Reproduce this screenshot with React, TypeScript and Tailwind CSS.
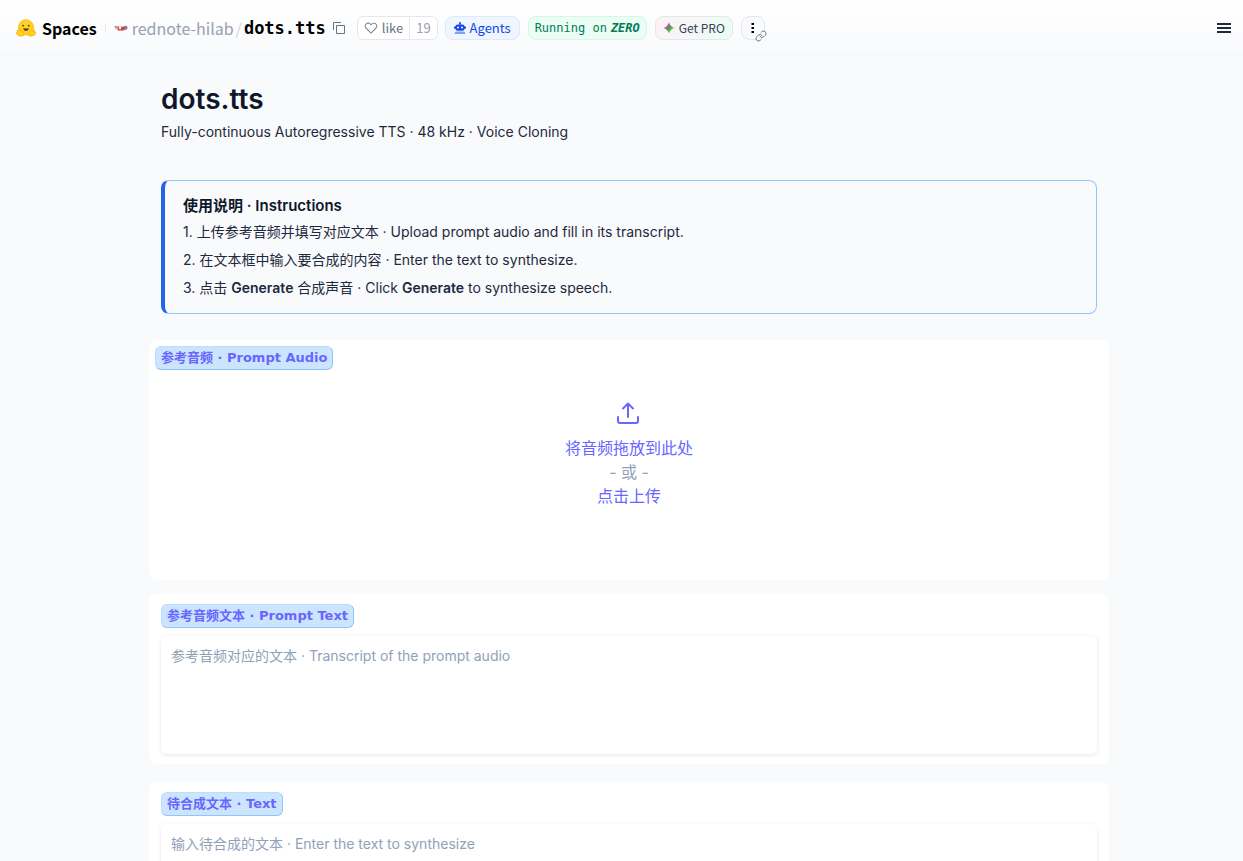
import { ReactNode, useState } from "react";

const SANS = "font-['Inter','Noto_Sans_CJK_SC',sans-serif]";
const HUB = "font-['Noto_Sans_CJK_SC',sans-serif]";
const MONO = "font-['DejaVu_Sans_Mono',monospace]";

const LABEL =
  "inline-flex h-6 items-center rounded-md border border-[#bfdbfe] border-r-[#93c5fd] border-b-[#93c5fd] bg-[#cce5ff] px-[5px] font-['DejaVu_Sans','Noto_Sans_CJK_SC',sans-serif] text-[13px] font-bold whitespace-nowrap text-[#6966ff]";

function HubLogo() {
  return (
    <svg viewBox="0 0 20 18" className="h-[18px] w-5" aria-hidden="true">
      <circle cx="10" cy="8.3" r="7.6" fill="#ffd21e" stroke="#ffb01a" strokeWidth="0.8" />
      <circle cx="7.2" cy="6.6" r="0.9" fill="#3a3b45" />
      <circle cx="12.8" cy="6.6" r="0.9" fill="#3a3b45" />
      <path d="M7.3 8.9q2.7 1.4 5.4 0-.3 3-2.7 3t-2.7-3z" fill="#3a3b45" />
      <path d="M8.7 11.2q1.3-1 2.6 0-1.3 1-2.6 0z" fill="#f94040" />
      <path d="M1.3 12.5q-.5-1.8 1-1.5l1.4 1.3q-.2-2.2 1.1-1.8 1.2 2 2.6 2.9 1.4 1.2.5 2.9-3.3 1.9-6.5-.4-1.2-.7-.8-1.6-.6-1.2.7-1.8z" fill="#ffd21e" stroke="#ffa60f" strokeWidth="0.7" />
      <path d="M18.7 12.5q.5-1.8-1-1.5l-1.4 1.3q.2-2.2-1.1-1.8-1.2 2-2.6 2.9-1.4 1.2-.5 2.9 3.3 1.9 6.5-.4 1.2-.7.8-1.6.6-1.2-.7-1.8z" fill="#ffd21e" stroke="#ffa60f" strokeWidth="0.7" />
    </svg>
  );
}

function OrgAvatar() {
  return (
    <svg viewBox="0 0 14 14" className="size-3.5" aria-hidden="true">
      <path d="M.3 5.2 3 4.8l2 .8-1 3.2-2.7-.5z" fill="#d9b5ab" />
      <path d="M1 5.3l1.3.5" stroke="#8b6f6b" />
      <path d="M3.3 5.8 10 5.4l1.2 2.3-1.2 1.8-6 .3z" fill="#c9606a" />
      <path d="M5 6 7 5.6l.4 1.9-2 .5z" fill="#fff" />
      <path d="M7.2 6.4 9.6 6l.4 2.4-2.6.5z" fill="#d5303e" />
      <path d="M9.8 5.1 12.6 4.7l1.2 2.4-2 2.1-1.4-.6z" fill="#8c7f80" />
    </svg>
  );
}

function CopyIcon() {
  return (
    <svg viewBox="0 0 12 12" className="size-3" fill="none" stroke="currentColor" aria-hidden="true">
      <path d="M3.5 3.5h8v8h-8z" />
      <path d="M.5 8V.5H8" />
    </svg>
  );
}

function HeartIcon() {
  return (
    <svg viewBox="0 0 32 32" className="size-3.5" fill="currentColor" aria-hidden="true">
      <path d="M22.45 6a5.47 5.47 0 0 1 3.91 1.64 5.7 5.7 0 0 1 0 8L16 26.13 5.64 15.64a5.7 5.7 0 0 1 0-8 5.48 5.48 0 0 1 7.82 0L16 10.24l2.53-2.58A5.44 5.44 0 0 1 22.45 6m0-2a7.47 7.47 0 0 0-5.34 2.24L16 7.36l-1.11-1.12a7.49 7.49 0 0 0-10.68 0 7.72 7.72 0 0 0 0 10.82L16 29l11.79-11.94a7.72 7.72 0 0 0 0-10.82A7.49 7.49 0 0 0 22.45 4z" />
    </svg>
  );
}

function AgentIcon() {
  return (
    <svg viewBox="0 0 12 12" className="size-3" fill="currentColor" aria-hidden="true">
      <circle cx="6" cy="1.1" r="1" />
      <path d="M5.5 1h1v2h-1z" />
      <path fillRule="evenodd" d="M3.8 2.4h4.4a2.6 2.6 0 0 1 2.5 2.1h.5q.8 0 .8.7v.8q0 .7-.8.7h-.5a2.6 2.6 0 0 1-2.5 2.1H3.8a2.6 2.6 0 0 1-2.5-2.1H.8Q0 6.7 0 6v-.8q0-.7.8-.7h.5a2.6 2.6 0 0 1 2.5-2.1zm.2 2.2a1 1 0 1 0 0 2 1 1 0 0 0 0-2zm4 0a1 1 0 1 0 0 2 1 1 0 0 0 0-2z" />
      <path d="M.8 12v-.7q0-1.7 1.8-1.7h6.8q1.8 0 1.8 1.7v.7z" opacity="0.5" />
    </svg>
  );
}

function SparkIcon() {
  return (
    <svg viewBox="0 0 12 12" className="size-3" aria-hidden="true">
      <defs>
        <linearGradient id="spark" x1="0" y1="0" x2="1" y2="1">
          <stop offset="0.25" stopColor="#ff2da0" />
          <stop offset="0.5" stopColor="#5f8f5c" />
          <stop offset="0.62" stopColor="#2fbf5f" />
          <stop offset="0.8" stopColor="#ffe000" />
        </linearGradient>
      </defs>
      <path d="M6 .3Q7.2 4.8 11.7 6 7.2 7.2 6 11.7 4.8 7.2.3 6 4.8 4.8 6 .3z" fill="url(#spark)" />
    </svg>
  );
}

function LinkIcon() {
  return (
    <svg viewBox="0 0 24 24" className="size-3" fill="none" stroke="currentColor" strokeWidth="2" strokeLinecap="round" aria-hidden="true">
      <path d="M10 13a5 5 0 0 0 7.54.54l3-3a5 5 0 0 0-7.07-7.07l-1.72 1.71" />
      <path d="M14 11a5 5 0 0 0-7.54-.54l-3 3a5 5 0 0 0 7.07 7.07l1.71-1.71" />
    </svg>
  );
}

function UploadIcon() {
  return (
    <svg viewBox="0 0 24 24" className="size-6" fill="none" stroke="currentColor" strokeWidth="2" strokeLinecap="round" strokeLinejoin="round" aria-hidden="true">
      <path d="M1 16v4a2 2 0 0 0 2 2h16a2 2 0 0 0 2-2v-4" />
      <path d="M11 16V3" />
      <path d="M6 7.5 11 2.5l5 5" />
    </svg>
  );
}

function Header() {
  return (
    <header className={`${HUB} flex h-[55px] shrink-0 items-center border-b border-gray-100 bg-gradient-to-b from-white to-[#f9fafc] pt-0.5 pr-3 pl-4 text-sm leading-5`}>
      <a href="#spaces" className="flex items-center gap-1.5 text-base font-bold text-black">
        <HubLogo />
        Spaces
      </a>
      <span className="mx-2 h-2 w-px bg-gray-200" />
      <a href="#org" className="flex items-center gap-1 text-base text-gray-400">
        <OrgAvatar />
        rednote-hilab
      </a>
      <span className="mx-0.5 text-base text-gray-300">/</span>
      <a href="#space" className={`${MONO} text-[17px] font-bold text-black`}>dots.tts</a>
      <button aria-label="Copy space name" className="ml-[7px] text-gray-500"><CopyIcon /></button>
      <div className="ml-3 flex h-6 rounded-md border border-gray-200 bg-white">
        <button className="flex items-center gap-1 px-1.5 text-[13px] text-gray-500"><HeartIcon />like</button>
        <button className="border-l border-gray-200 px-1.5 text-[13px] text-gray-400">19</button>
      </div>
      <button className="ml-[7px] flex h-6 items-center gap-1 rounded-lg border border-blue-100 bg-blue-50 px-2 text-[13px] text-blue-700">
        <AgentIcon />
        Agents
      </button>
      <button className={`${MONO} ml-2 flex h-6 items-center gap-1 rounded-lg border border-emerald-100 bg-[#ecfdf5] px-1.5 text-xs text-emerald-700`}>
        Running on
        <b className="italic">ZERO</b>
      </button>
      <button className="ml-2 flex h-6 items-center gap-1 rounded-lg border border-gray-200 bg-gradient-to-r from-pink-50 to-emerald-50 px-[7px] text-xs text-gray-700">
        <SparkIcon />
        Get PRO
      </button>
      <div className="relative ml-2">
        <button aria-label="More" className="flex h-6 w-6 items-center justify-center rounded-lg border border-gray-200 bg-gray-50 text-black">
          <svg viewBox="0 0 4 12" className="h-3 w-1" fill="currentColor">
            <path d="M.5 1h2.5v2H.5zM.5 5h2.5v2H.5zM.5 9h2.5v2H.5z" />
          </svg>
        </button>
        <span className="absolute -right-0.5 -bottom-0.5 rounded-full bg-white text-gray-500"><LinkIcon /></span>
      </div>
      <button aria-label="Menu" className="ml-auto text-gray-800">
        <svg viewBox="0 0 14 10" className="h-2.5 w-3.5" fill="currentColor">
          <path d="M0 0h14v2H0zM0 4h14v2H0zM0 8h14v2H0z" />
        </svg>
      </button>
    </header>
  );
}

interface TextFieldProps {
  id: string;
  label: string;
  placeholder: string;
}

function TextField({ id, label, placeholder }: TextFieldProps) {
  const [value, setValue] = useState("");
  return (
    <div className="flex flex-col items-start rounded-lg bg-white px-3 py-2.5">
      <label htmlFor={id} className={LABEL}>{label}</label>
      <textarea
        id={id}
        value={value}
        onChange={e => setValue(e.target.value)}
        placeholder={placeholder}
        className="mt-2 h-[118px] w-full resize-none rounded-md bg-white px-2.5 py-2.5 text-sm leading-5 text-slate-800 shadow-[0_1px_4px_rgba(0,0,0,0.1)] outline-none placeholder:text-slate-400"
      />
    </div>
  );
}

function Step({ children }: { children: ReactNode }) {
  return <li className="leading-7">{children}</li>;
}

export default function App() {
  return (
    <div className={`${SANS} flex h-screen flex-col bg-[#f9fafc] text-slate-800`}>
      <Header />
      <main className="min-h-0 flex-1 overflow-y-auto pl-[15px] [scrollbar-width:none]">
        <div className="mx-auto max-w-[960px] pt-6 pb-8">
          <div className="px-3">
            <h1 className="text-[28px] leading-10 font-semibold text-slate-900">dots.tts</h1>
            <p className="text-sm leading-[26px]">Fully-continuous Autoregressive TTS · 48 kHz · Voice Cloning</p>
            <section className="mt-[35px] rounded-lg border border-l-4 border-[#93c5fd] border-l-[#2563eb] pt-[13px] pb-[11px] pl-[18px] text-sm">
              <h2 className="text-[15px] leading-6 font-semibold text-slate-900">使用说明 · Instructions</h2>
              <ol className="list-inside">
                <Step>1. 上传参考音频并填写对应文本 · Upload prompt audio and fill in its transcript.</Step>
                <Step>2. 在文本框中输入要合成的内容 · Enter the text to synthesize.</Step>
                <Step>3. 点击 <b className="font-semibold">Generate</b> 合成声音 · Click <b className="font-semibold">Generate</b> to synthesize speech.</Step>
              </ol>
            </section>
          </div>
          <section className="mt-[26px] flex h-60 flex-col items-start rounded-lg bg-white p-1.5">
            <span className={LABEL}>参考音频 · Prompt Audio</span>
            <button className="mt-[31px] flex w-full flex-col items-center text-base leading-6 text-[#6966ff]">
              <UploadIcon />
              <span className="mt-[11px]">将音频拖放到此处</span>
              <span className="text-slate-400">- 或 -</span>
              <span>点击上传</span>
            </button>
          </section>
          <div className="mt-3.5 flex flex-col gap-[18px]">
            <TextField id="prompt-text" label="参考音频文本 · Prompt Text" placeholder="参考音频对应的文本 · Transcript of the prompt audio" />
            <TextField id="text" label="待合成文本 · Text" placeholder="输入待合成的文本 · Enter the text to synthesize" />
          </div>
        </div>
      </main>
    </div>
  );
}
